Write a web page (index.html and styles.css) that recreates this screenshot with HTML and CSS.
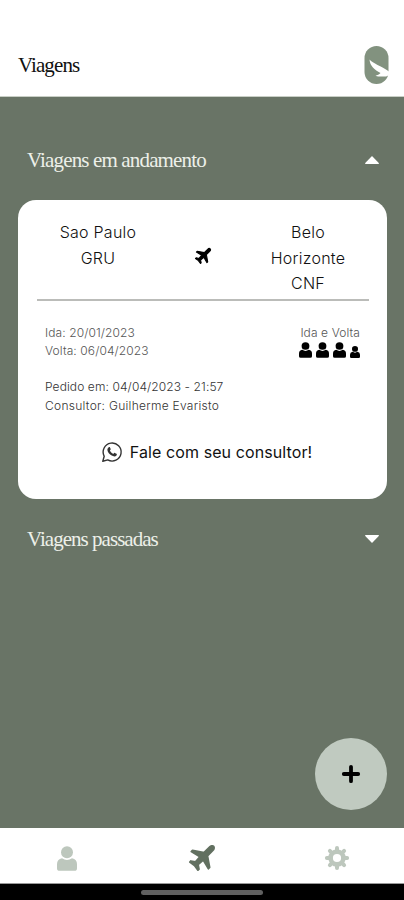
FILE: index.html
```html
<!DOCTYPE html>
<html lang="pt-BR">
    <head>
        <meta charset="utf-8">
        <meta name="viewport" content="width=device-width, initial-scale=1">
        <title>Viagens</title>
        <link rel="stylesheet" href="styles.css">
    </head>
    <body>
        <svg class="sprite">
            <symbol id="plane" viewBox="0 0 24 24">
                <path transform="rotate(45 12 12)" stroke="currentColor" stroke-width="1.6" stroke-linejoin="round" d="M23.200 14.800v-1.600L14.200 7V0C14.200-1.600 13.200-3.200 12-3.200S9.800-1.600 9.800 0v7L.8 13.200v1.600l9-2.200.5 6.200-3.600 2.400v1.400l5.300-.8 5.300.8v-1.400l-3.600-2.400.5-6.200z"/>
            </symbol>
            <symbol id="person" viewBox="0 0 20 25" preserveAspectRatio="none">
                <circle cx="10" cy="6.2" r="6"/>
                <path d="M5 12.2q5 3.4 10 0 5 .8 5 6v4q0 2.6-2.6 2.6H2.6Q0 24.8 0 22.2v-4q0-5.2 5-6z"/>
            </symbol>
        </svg>
        <div class="app">
            <header class="header">
                <h1>Viagens</h1>
                <svg class="logo" viewBox="0 0 25 38">
                    <rect x=".5" y="0" width="24" height="38" rx="12"/>
                    <path class="bird" d="M5.500 13.500C9 17.500 17 20 25 25.500V28.500C24 30 22.500 30.500 21 30.500c-3 0-6 .5-9.500-.8 1.800-.5 3.800-1.200 5-2.700C10.500 24 6 20 5.500 13.500z"/>
                </svg>
            </header>
            <main class="content">
                <div class="section">
                    <h2>Viagens em andamento</h2>
                    <svg class="arrow" viewBox="0 0 14 8"><path d="M7 0l7 7.200q0 .8-.8.8H.8Q0 8 0 7.200z"/></svg>
                </div>
                <div class="card">
                    <div class="route">
                        <p class="city">Sao Paulo<br>GRU</p>
                        <svg class="route-plane"><use href="#plane"/></svg>
                        <p class="city">Belo<br>Horizonte<br>CNF</p>
                    </div>
                    <div class="info">
                        <div class="dates">
                            <p>Ida: 20/01/2023</p>
                            <p>Volta: 06/04/2023</p>
                        </div>
                        <div class="kind">
                            <p>Ida e Volta</p>
                            <div class="people">
                                <svg class="adult"><use href="#person"/></svg>
                                <svg class="adult"><use href="#person"/></svg>
                                <svg class="adult"><use href="#person"/></svg>
                                <svg class="child"><use href="#person"/></svg>
                            </div>
                        </div>
                    </div>
                    <div class="order">
                        <p>Pedido em: 04/04/2023 - 21:57</p>
                        <p class="name">Consultor: Guilherme Evaristo</p>
                    </div>
                    <div class="talk">
                        <svg class="whats" viewBox="0 0 20 20">
                            <path class="bubble" d="M.8 19.200l1.400-4.900A9 9 0 1 1 5.700 17.900z"/>
                            <path d="M6.800 5.200c.5-.3 1-.2 1.200.3l.7 1.600c.2.500-.6 1.200-.8 1.500.6 1.500 1.900 2.700 3.400 3.300.4-.3 1-1.200 1.500-1l1.700.9c.6.3.3 1.200 0 1.600-1.100 1.400-3 1.200-4.800.2C7.500 12.500 5.700 10.300 5.400 8c-.1-1.100.5-2.200 1.400-2.800z"/>
                        </svg>
                        <span>Fale com seu consultor!</span>
                    </div>
                </div>
                <div class="section past">
                    <h2>Viagens passadas</h2>
                    <svg class="arrow down" viewBox="0 0 14 8"><path d="M7 0l7 7.200q0 .8-.8.8H.8Q0 8 0 7.200z"/></svg>
                </div>
                <button class="add" aria-label="Nova viagem">
                    <svg viewBox="0 0 18 18"><path d="M9 1.800v14.400M1.800 9h14.400"/></svg>
                </button>
            </main>
            <nav class="tabs">
                <a class="tab"><svg class="tab-person"><use href="#person"/></svg></a>
                <a class="tab on"><svg class="tab-plane"><use href="#plane"/></svg></a>
                <a class="tab">
                    <svg class="tab-gear" viewBox="0 0 24 24">
                        <circle class="ring" cx="12" cy="12" r="6.4"/>
                        <path class="teeth" d="M12 1.900v2M12 20.100v2M1.900 12h2M20.100 12h2M4.900 4.900l1.400 1.400M17.700 17.700l1.400 1.400M4.900 19.100l1.400-1.400M17.700 6.300l1.400-1.400"/>
                    </svg>
                </a>
            </nav>
            <div class="home"><span class="home-bar"></span></div>
        </div>
    </body>
</html>
```

FILE: styles.css
```css
*{
    margin: 0;
    padding: 0;
    box-sizing: border-box;
}
body{
    font-family: Inter, "Open Sans", sans-serif;
    background: #697466;
    color: #111;
}
svg{
    display: block;
    fill: currentColor;
    overflow: visible;
}
symbol{
    overflow: visible;
}
.sprite{
    position: absolute;
    width: 0;
    height: 0;
}
.app{
    display: flex;
    flex-direction: column;
    height: 900px;
}
h1, h2{
    font-family: "Liberation Serif", serif;
    font-weight: normal;
    font-size: 21px;
    line-height: 26px;
}
.header{
    height: 97px;
    padding: 46px 15px 0 18px;
    display: flex;
    justify-content: space-between;
    align-items: flex-start;
    background: #fff;
    border-bottom: 1px solid #c9cfc6;
}
h1{
    margin-top: 6px;
    letter-spacing: -.9px;
}
.logo{
    width: 25px;
    height: 38px;
    fill: #82927f;
}
.bird{
    fill: #fff;
}
.content{
    flex: 1;
    display: flex;
    flex-direction: column;
    padding: 50px 17px 18px 18px;
}
.section{
    display: flex;
    justify-content: space-between;
    align-items: center;
    height: 26px;
    padding: 0 8px 0 9px;
    color: #edf0e9;
}
h2{
    letter-spacing: -.85px;
}
.past h2{
    letter-spacing: -.97px;
}
.arrow{
    width: 14px;
    height: 8px;
    color: #fff;
}
.down{
    transform: rotate(180deg);
}
.card{
    height: 299px;
    margin-top: 27px;
    padding: 20px 18px 0 19px;
    background: #fff;
    border-radius: 18px;
}
.route{
    display: grid;
    grid-template-columns: 122px 1fr 122px;
    height: 81px;
    border-bottom: 2px solid #bbbcb9;
}
.city{
    font-size: 16px;
    line-height: 25.5px;
    font-weight: 300;
    letter-spacing: .25px;
    text-align: center;
}
.route-plane{
    width: 16px;
    height: 16px;
    margin: 28px auto 0;
    color: #000;
}
.info{
    display: flex;
    justify-content: space-between;
    padding: 23px 9px 0 8px;
}
.dates, .kind, .order{
    font-size: 12px;
    line-height: 18.2px;
    font-weight: 300;
    letter-spacing: .1px;
    color: #333;
}
.dates, .kind{
    color: #555;
}
.kind{
    text-align: right;
}
.people{
    display: flex;
    justify-content: flex-end;
    align-items: flex-end;
    gap: 4px;
    color: #000;
}
.adult{
    width: 13px;
    height: 16px;
}
.child{
    width: 10px;
    height: 12px;
}
.order{
    padding: 18px 0 0 8px;
}
.name{
    letter-spacing: .28px;
}
.talk{
    display: flex;
    justify-content: center;
    align-items: center;
    gap: 8px;
    margin-top: 26px;
    padding-left: 8px;
    font-size: 16px;
    line-height: 22px;
    letter-spacing: .1px;
}
.whats{
    width: 20px;
    height: 20px;
    color: #333;
}
.bubble{
    fill: none;
    stroke: currentColor;
    stroke-width: 1.4;
    stroke-linejoin: round;
}
.past{
    margin-top: 27px;
}
.add{
    display: flex;
    justify-content: center;
    align-items: center;
    width: 72px;
    height: 72px;
    margin: auto 0 0 auto;
    border: 0;
    border-radius: 50%;
    background: #c0cac0;
}
.add svg{
    width: 18px;
    height: 18px;
    stroke: #000;
    stroke-width: 3.8;
    stroke-linecap: round;
}
.tabs{
    display: grid;
    grid-template-columns: repeat(3, 1fr);
    height: 56px;
    padding-top: 5px;
    background: #fff;
    border-bottom: 1px solid #999;
}
.tab{
    display: flex;
    justify-content: center;
    align-items: center;
    color: #bdc7bd;
}
.on{
    color: #627060;
}
.tab-person{
    width: 20px;
    height: 25px;
}
.tab-plane{
    width: 26px;
    height: 26px;
}
.tab-gear{
    width: 24px;
    height: 24px;
}
.ring, .teeth{
    fill: none;
    stroke: currentColor;
}
.ring{
    stroke-width: 4.6;
}
.teeth{
    stroke-width: 4;
    stroke-linecap: round;
}
.home{
    height: 16px;
    padding-top: 6px;
    background: #000;
}
.home-bar{
    display: block;
    width: 122px;
    height: 5px;
    margin: 0 auto;
    border-radius: 3px;
    background: #606060;
}
```
